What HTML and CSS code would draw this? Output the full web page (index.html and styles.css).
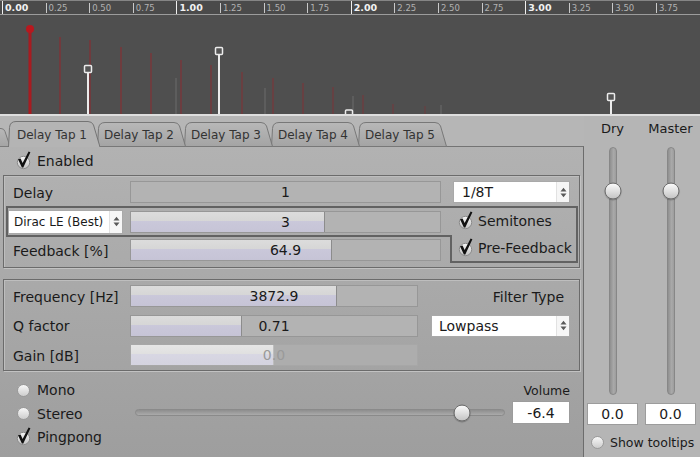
FILE: index.html
```html
<!DOCTYPE html>
<html>
<head>
<meta charset="utf-8">
<title>Delay</title>
<link rel="stylesheet" href="styles.css">
</head>
<body>
<svg class="defs" width="0" height="0" aria-hidden="true">
  <defs>
    <linearGradient id="knobg" x1="0" y1="0" x2="0" y2="1">
      <stop offset="0" stop-color="#f6f6f6"/>
      <stop offset="1" stop-color="#c2c2c2"/>
    </linearGradient>
    <linearGradient id="tabg" x1="0" y1="0" x2="0" y2="1">
      <stop offset="0" stop-color="#b8b8b8"/>
      <stop offset="1" stop-color="#a4a4a4"/>
    </linearGradient>
  </defs>
</svg>
<div class="app">
  <header class="timeline">
    <div class="ruler">
      <span class="tick major">0.00</span><span class="tick">0.25</span><span class="tick">0.50</span><span class="tick">0.75</span>
      <span class="tick major">1.00</span><span class="tick">1.25</span><span class="tick">1.50</span><span class="tick">1.75</span>
      <span class="tick major">2.00</span><span class="tick">2.25</span><span class="tick">2.50</span><span class="tick">2.75</span>
      <span class="tick major">3.00</span><span class="tick">3.25</span><span class="tick">3.50</span><span class="tick">3.75</span>
    </div>
    <svg class="graph" width="700" height="101" viewBox="0 0 700 101">
      <rect width="700" height="101" fill="#4f4f4f"/>
      <g stroke="#8e2a2f" stroke-width="2">
        <line x1="60" y1="22" x2="60" y2="99" opacity=".55"/>
        <line x1="90" y1="25" x2="90" y2="99" opacity=".52"/>
        <line x1="121" y1="32" x2="121" y2="99" opacity=".5"/>
        <line x1="151" y1="38" x2="151" y2="99" opacity=".48"/>
        <line x1="181" y1="45" x2="181" y2="99" opacity=".46"/>
        <line x1="211" y1="50" x2="211" y2="99" opacity=".44"/>
        <line x1="242" y1="57" x2="242" y2="99" opacity=".42"/>
        <line x1="273" y1="63" x2="273" y2="99" opacity=".4"/>
        <line x1="303" y1="68" x2="303" y2="99" opacity=".38"/>
        <line x1="333" y1="72" x2="333" y2="99" opacity=".36"/>
        <line x1="363" y1="80" x2="363" y2="99" opacity=".34"/>
        <line x1="393" y1="89" x2="393" y2="99" opacity=".3"/>
        <line x1="425" y1="91" x2="425" y2="99" opacity=".25"/>
      </g>
      <g stroke="#626262" stroke-width="1.5">
        <line x1="176" y1="63" x2="176" y2="99"/>
        <line x1="265" y1="73" x2="265" y2="99"/>
        <line x1="353" y1="81" x2="353" y2="99"/>
        <line x1="441" y1="90" x2="441" y2="99"/>
      </g>
      <line x1="30" y1="14" x2="30" y2="99" stroke="#a81b20" stroke-width="3"/>
      <circle cx="30" cy="14" r="4" fill="#b8181e"/>
      <g stroke="#ececec">
        <line x1="88" y1="54" x2="88" y2="99" stroke-width="2"/>
        <rect x="84.5" y="50.5" width="7" height="7" rx="1" fill="#555" stroke-width="1.5"/>
        <line x1="219" y1="36" x2="219" y2="99" stroke-width="2"/>
        <rect x="215.5" y="32.5" width="7" height="7" rx="1" fill="#555" stroke-width="1.5"/>
        <line x1="611" y1="82" x2="611" y2="99" stroke-width="2"/>
        <rect x="607.5" y="78.5" width="7" height="7" rx="1" fill="#555" stroke-width="1.5"/>
        <rect x="345.5" y="95" width="7" height="5" rx="1" fill="#555" stroke-width="1.5"/>
      </g>
      <rect y="99" width="700" height="2" fill="#dedede"/>
    </svg>
  </header>

  <div class="main">
    <section class="left">
      <nav class="tabbar">
        <span class="tab stub">
          <svg class="tabshape" width="10" height="26" viewBox="0 0 10 26"><path d="M-6 25.5 L-6 7.5 L1 7.5 Q4 7.5 5 10.5 L10 25.5 Z" fill="url(#tabg)" stroke="#7a7a7a"/></svg>
        </span>
        <div class="tab active">
          <svg class="tabshape" width="92" height="26" viewBox="0 0 92 26"><path d="M0.5 26 L1.5 6.5 Q2 0.5 8 0.5 L80 0.5 Q84 0.5 85.5 4 L92 26" fill="#b4b4b4" stroke="#747474"/></svg>
          <span class="tab-text">Delay Tap 1</span>
        </div>
        <div class="tab t2">
          <svg class="tabshape" width="89" height="26" viewBox="0 0 89 26"><path d="M0.5 25.5 L1.5 7.5 Q2 1.5 8 1.5 L77 1.5 Q81 1.5 82.5 5 L88.5 25.5 Z" fill="url(#tabg)" stroke="#787878"/></svg>
          <span class="tab-text">Delay Tap 2</span>
        </div>
        <div class="tab t3">
          <svg class="tabshape" width="89" height="26" viewBox="0 0 89 26"><path d="M0.5 25.5 L1.5 7.5 Q2 1.5 8 1.5 L77 1.5 Q81 1.5 82.5 5 L88.5 25.5 Z" fill="url(#tabg)" stroke="#787878"/></svg>
          <span class="tab-text">Delay Tap 3</span>
        </div>
        <div class="tab t4">
          <svg class="tabshape" width="89" height="26" viewBox="0 0 89 26"><path d="M0.5 25.5 L1.5 7.5 Q2 1.5 8 1.5 L77 1.5 Q81 1.5 82.5 5 L88.5 25.5 Z" fill="url(#tabg)" stroke="#787878"/></svg>
          <span class="tab-text">Delay Tap 4</span>
        </div>
        <div class="tab t5">
          <svg class="tabshape" width="89" height="26" viewBox="0 0 89 26"><path d="M0.5 25.5 L1.5 7.5 Q2 1.5 8 1.5 L77 1.5 Q81 1.5 82.5 5 L88.5 25.5 Z" fill="url(#tabg)" stroke="#787878"/></svg>
          <span class="tab-text">Delay Tap 5</span>
        </div>
      </nav>

      <div class="panel">
        <div class="chk-row enabled">
          <svg class="check" width="16" height="20" viewBox="0 0 16 20"><circle cx="8.5" cy="11.5" r="6.2" fill="url(#knobg)" stroke="#8a8a8a"/><path d="M3 8.2 L5.6 7.4 L7.6 12 L13.6 0.6 L15.4 1.3 L8.3 16.5 L6.9 16.5 Z" fill="#111"/></svg>
          <span>Enabled</span>
        </div>

        <div class="group g1">
          <div class="lbl r1-label">Delay</div>
          <div class="field r1-field"><span class="fval">1</span></div>
          <div class="combo r1-combo">
            <span class="ctext">1/8T</span>
            <span class="spin"><svg width="7" height="11" viewBox="0 0 7 11"><path d="M0.5 4.5 L3.5 0.8 L6.5 4.5Z M0.5 6.5 L3.5 10.2 L6.5 6.5Z" fill="#5a5a5a"/></svg></span>
          </div>

          <div class="row2">
            <div class="combo dirac">
              <span class="ctext">Dirac LE (Best)</span>
              <span class="spin"><svg width="7" height="11" viewBox="0 0 7 11"><path d="M0.5 4.5 L3.5 0.8 L6.5 4.5Z M0.5 6.5 L3.5 10.2 L6.5 6.5Z" fill="#5a5a5a"/></svg></span>
            </div>
            <div class="field wide pitch"><div class="fill" style="width:62.7%"></div><span class="fval">3</span></div>
          </div>

          <div class="row3">
            <div class="lbl fixed">Feedback [%]</div>
            <div class="field wide"><div class="fill" style="width:65%"></div><span class="fval">64.9</span></div>
          </div>

          <div class="opts">
            <div class="chk-row small">
              <svg class="check" width="16" height="20" viewBox="0 0 16 20"><circle cx="8.5" cy="11.5" r="6.2" fill="url(#knobg)" stroke="#8a8a8a"/><path d="M3 8.2 L5.6 7.4 L7.6 12 L13.6 0.6 L15.4 1.3 L8.3 16.5 L6.9 16.5 Z" fill="#111"/></svg>
              <span>Semitones</span>
            </div>
            <div class="chk-row small">
              <svg class="check" width="16" height="20" viewBox="0 0 16 20"><circle cx="8.5" cy="11.5" r="6.2" fill="url(#knobg)" stroke="#8a8a8a"/><path d="M3 8.2 L5.6 7.4 L7.6 12 L13.6 0.6 L15.4 1.3 L8.3 16.5 L6.9 16.5 Z" fill="#111"/></svg>
              <span>Pre-Feedback</span>
            </div>
          </div>
        </div>

        <div class="group g2">
          <div class="lbl">Frequency [Hz]</div>
          <div class="field"><div class="fill" style="width:71.9%"></div><span class="fval">3872.9</span></div>
          <div class="ftype">Filter Type</div>

          <div class="lbl">Q factor</div>
          <div class="field"><div class="fill" style="width:38.9%"></div><span class="fval">0.71</span></div>
          <div class="combo lowpass">
            <span class="ctext">Lowpass</span>
            <span class="spin"><svg width="7" height="11" viewBox="0 0 7 11"><path d="M0.5 4.5 L3.5 0.8 L6.5 4.5Z M0.5 6.5 L3.5 10.2 L6.5 6.5Z" fill="#5a5a5a"/></svg></span>
          </div>

          <div class="lbl">Gain [dB]</div>
          <div class="field disabled"><div class="fill" style="width:50%"></div><span class="fval">0.0</span></div>
          <div></div>
        </div>

        <div class="bottom">
          <div class="modes">
            <div class="mode"><span class="radio"></span>Mono</div>
            <div class="mode"><span class="radio"></span>Stereo</div>
            <div class="mode">
              <svg class="check mcheck" width="16" height="20" viewBox="0 0 16 20"><circle cx="8.5" cy="11.5" r="6.2" fill="url(#knobg)" stroke="#8a8a8a"/><path d="M3 8.2 L5.6 7.4 L7.6 12 L13.6 0.6 L15.4 1.3 L8.3 16.5 L6.9 16.5 Z" fill="#111"/></svg>
              Pingpong
            </div>
          </div>
          <div class="vol">
            <div class="vol-label">Volume</div>
            <div class="vol-row">
              <div class="hslider"><span class="knob" style="left:88.6%"></span></div>
              <div class="valbox vol-box">-6.4</div>
            </div>
          </div>
        </div>
      </div>
    </section>

    <aside class="side">
      <div class="mix">
        <div class="ch">
          <div class="ch-label">Dry</div>
          <div class="vslider"><span class="knob" style="top:17.3%"></span></div>
          <div class="valbox">0.0</div>
        </div>
        <div class="ch">
          <div class="ch-label">Master</div>
          <div class="vslider"><span class="knob" style="top:17.3%"></span></div>
          <div class="valbox">0.0</div>
        </div>
      </div>
      <div class="tooltips"><span class="radio"></span>Show tooltips</div>
    </aside>
  </div>
</div>
</body>
</html>
```

FILE: styles.css
```css
* { box-sizing: border-box; }
html, body { margin: 0; padding: 0; }
body {
  width: 700px;
  height: 457px;
  overflow: hidden;
  font-family: "DejaVu Sans", Verdana, sans-serif;
  color: #1a1a1a;
  background: #b5b5b5;
}
.defs { position: absolute; width: 0; height: 0; }

/* ---------- timeline ---------- */
.timeline { height: 116px; background: #4f4f4f; }
.ruler {
  height: 15px;
  display: flex;
  padding-left: 2px;
  background: #4a4a4a;
  border-top: 1px solid #858585;
  border-bottom: 1px solid #9c9c9c;
}
.tick {
  flex: none;
  width: 43.6px;
  height: 10px;
  margin-top: 2px;
  border-left: 1px solid #c9c9c9;
  padding-left: 2px;
  display: flex;
  align-items: center;
  font-size: 8.5px;
  color: #b2b2b2;
  white-space: nowrap;
  overflow: hidden;
}
.tick.major {
  height: 13px;
  margin-top: 0;
  border-left-color: #efefef;
  font-weight: bold;
  font-size: 9.5px;
  color: #f2f2f2;
}
.graph { display: block; }

/* ---------- main ---------- */
.main { display: flex; height: 341px; }
.left { width: 584px; display: flex; flex-direction: column; }

.tabbar {
  height: 30px;
  flex: none;
  display: flex;
  align-items: flex-end;
  background: #b6b6b6;
  position: relative;
  z-index: 2;
}
.tab {
  position: relative;
  height: 26px;
  margin-bottom: -1px;
  display: flex;
  align-items: center;
  font-size: 12px;
  color: #333;
  white-space: nowrap;
}
.tabshape { position: absolute; left: 0; top: 0; }
.tab-text { position: relative; padding-top: 2px; }
.stub { width: 10px; z-index: 1; }
.tab.active { width: 92px; margin-left: -2px; padding-left: 9px; z-index: 10; }
.tab.t2, .tab.t3, .tab.t4, .tab.t5 { width: 89px; margin-left: -3px; padding-left: 7px; }
.tab.t2 { z-index: 6; }
.tab.t3 { z-index: 5; margin-left: -2px; }
.tab.t4 { z-index: 4; margin-left: -2px; }
.tab.t5 { z-index: 3; margin-left: -2px; }

.panel {
  flex: 1;
  border-top: 1px solid #747474;
  border-right: 1px solid #6c6c6c;
  background: linear-gradient(#b2b2b2, #9e9e9e);
  padding: 3px 3px 0 3px;
  display: flex;
  flex-direction: column;
}

/* checkbox rows */
.chk-row { display: flex; align-items: center; font-size: 14px; white-space: nowrap; }
.chk-row .check { flex: none; margin-right: 6px; }
.enabled { height: 21px; padding-left: 12px; padding-top: 1px; }
.small .check { margin-right: 5px; }

/* group boxes */
.group {
  border: 1px solid #6b6b6b;
  box-shadow: inset 1px 1px 0 #bebebe, 1px 1px 0 #c2c2c2;
}
.lbl { font-size: 14px; padding-left: 7px; padding-top: 1px; display: flex; align-items: center; white-space: nowrap; }
.lbl.fixed { width: 124px; flex: none; }

.g1 {
  margin-top: 4px;
  padding: 4px 1px 4px 2px;
  display: grid;
  grid-template-columns: 120px 326px 126px;
  grid-template-rows: 24px 2px 31px 26px;
}
.r1-label { grid-column: 1; grid-row: 1; }
.r1-field { grid-column: 2; grid-row: 1; margin-left: 4px; width: 311px; height: 22px; align-self: center; }
.r1-combo { grid-column: 3; grid-row: 1; margin-left: 1px; width: 117px; height: 22px; align-self: center; }
.row2 {
  grid-column: 1 / 3;
  grid-row: 3;
  display: flex;
  align-items: center;
  border: 2px solid #626262;
  border-right: none;
}
.row3 {
  grid-column: 1 / 3;
  grid-row: 4;
  display: flex;
  align-items: center;
  border-right: 2px solid #626262;
}
.opts {
  grid-column: 3;
  grid-row: 3 / 5;
  border: 2px solid #626262;
  border-left: none;
  display: flex;
  flex-direction: column;
  justify-content: space-around;
  padding-left: 5px;
}
.field.wide { width: 311px; height: 22px; flex: none; }
.field.pitch { margin-left: 7px; }

.g2 {
  margin-top: 11px;
  padding: 5px 1px 4px 2px;
  display: grid;
  grid-template-columns: 124px 288px 1fr;
  grid-template-rows: repeat(3, 22px);
  row-gap: 7.5px;
}
.ftype { font-size: 14px; text-align: right; padding-right: 14px; padding-top: 1px; display: flex; align-items: center; justify-content: flex-end; }
.lowpass { margin-left: 13px; width: 139px; height: 22px; }
.lowpass .ctext { padding-left: 7px; }

/* slider-value fields */
.field {
  position: relative;
  border: 1px solid #979797;
  background: #b3b3b3;
  display: flex;
  align-items: center;
  justify-content: center;
  font-size: 14px;
  overflow: hidden;
}
.fill {
  position: absolute;
  left: 0; top: 0; bottom: 0;
  background: linear-gradient(#dcdcdc 0, #d6d6d6 45%, #cac8da 45%, #c6c4d6 100%);
  border-right: 1px solid #8c8c8c;
}
.fval { position: relative; color: #1a1a1a; }
.field.disabled { border-color: #a7a7a7; background: #adadad; }
.field.disabled .fill {
  background: linear-gradient(#e6e6e6 0, #e0e0e0 45%, #d8d7e3 45%, #d4d3e0 100%);
  border-right-color: #bdbdbd;
}
.field.disabled .fval { color: #9a9a9a; }

/* combos */
.combo {
  background: #fff;
  border: 1px solid #a9a9a9;
  display: flex;
  align-items: center;
  font-size: 14px;
}
.ctext { flex: 1; padding-left: 8px; white-space: nowrap; }
.spin {
  width: 13px;
  align-self: stretch;
  border-left: 1px solid #e2e2e2;
  background: #f6f6f6;
  display: flex;
  align-items: center;
  justify-content: center;
}
.dirac { width: 115px; height: 24px; flex: none; font-size: 12px; }
.dirac .ctext { padding-left: 5px; }

/* bottom */
.bottom { flex: 1; display: flex; padding: 7px 0 0 14px; }
.modes { width: 118px; flex: none; display: flex; flex-direction: column; }
.mode { height: 23.5px; display: flex; align-items: center; font-size: 14px; padding-top: 1px; }
.radio {
  flex: none;
  width: 13px;
  height: 13px;
  border-radius: 50%;
  border: 1px solid #9a9a9a;
  background: linear-gradient(#f7f7f7, #cdcdcd);
  margin-right: 7px;
}
.mcheck { margin-left: -2px; margin-right: 6px; flex: none; }
.vol { width: 435px; padding-top: 3px; display: flex; flex-direction: column; }
.vol-label { height: 20px; line-height: 20px; text-align: right; font-size: 12.5px; }
.vol-row { margin-top: 0; display: flex; align-items: center; gap: 7px; }
.hslider {
  position: relative;
  width: 370px;
  height: 7px;
  border-radius: 4px;
  border: 1px solid #8a8a8a;
  background: linear-gradient(#8e8e8e, #aaaaaa);
}
.knob {
  position: absolute;
  width: 17px;
  height: 17px;
  border-radius: 50%;
  border: 1px solid #6c6c6c;
  background: linear-gradient(#fbfbfb, #c4c4c4);
  box-shadow: 0 1px 1px rgba(0,0,0,.25);
}
.hslider .knob { top: 50%; transform: translate(-50%, -50%); }
.valbox {
  background: #fff;
  border: 1px solid #9c9c9c;
  display: flex;
  align-items: center;
  justify-content: center;
  font-size: 14px;
}
.vol-box { width: 58px; height: 23px; }

/* side */
.side { flex: 1; padding: 5px 0 0 3px; background: #b5b5b5; }
.mix { display: flex; gap: 7px; }
.ch { width: 51px; display: flex; flex-direction: column; align-items: center; }
.ch-label { font-size: 13px; height: 16px; line-height: 16px; white-space: nowrap; }
.vslider {
  position: relative;
  margin-top: 10px;
  width: 8px;
  height: 248px;
  border-radius: 4px;
  border: 1px solid #878787;
  background: linear-gradient(90deg, #8f8f8f, #a9a9a9 60%, #9d9d9d);
}
.vslider .knob { left: 50%; transform: translate(-50%, -50%); }
.ch .valbox { margin-top: 8px; width: 100%; height: 22px; }
.tooltips {
  margin-top: 8px;
  height: 18px;
  display: flex;
  align-items: center;
  padding-left: 4px;
  font-size: 12.5px;
  white-space: nowrap;
}
.tooltips .radio { margin-right: 6px; }
```
